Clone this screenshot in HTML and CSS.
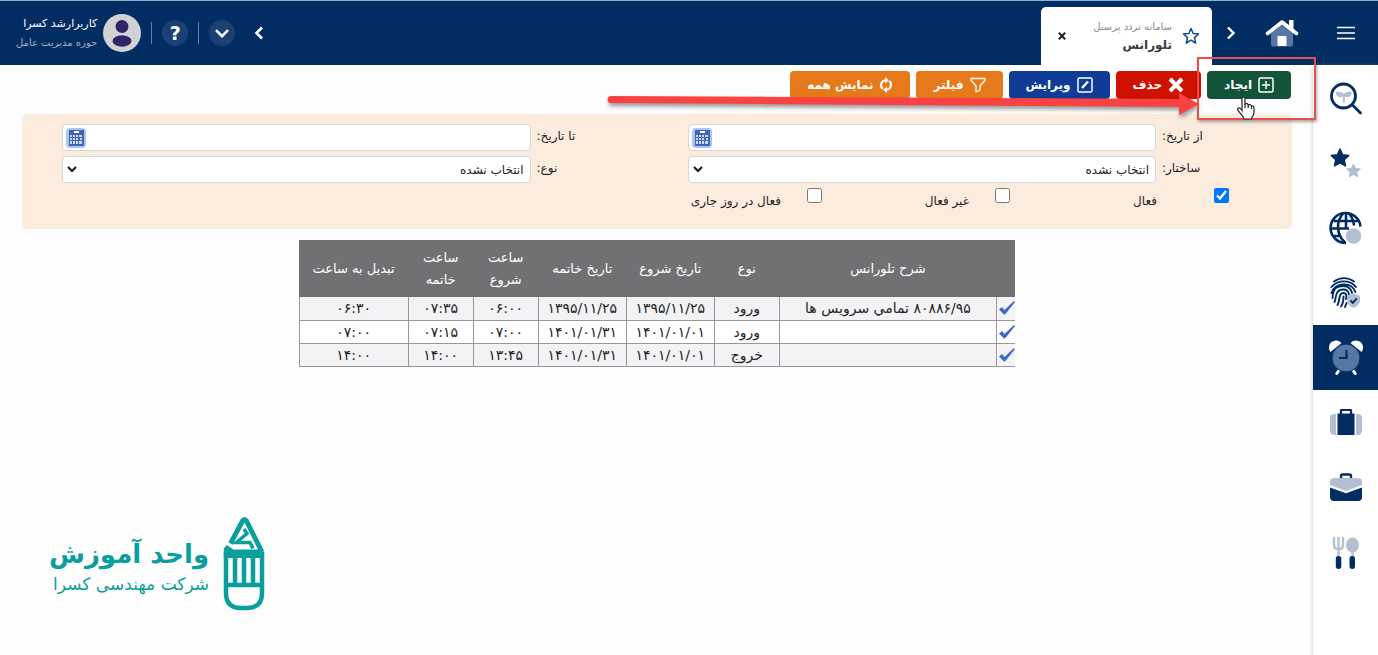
FILE: index.html
```html
<!DOCTYPE html>
<html lang="fa" dir="rtl">
<head>
<meta charset="utf-8">
<meta name="viewport" content="width=device-width, initial-scale=1">
<title>تلورانس</title>
<link rel="stylesheet" href="styles.css">
</head>
<body>
<header class="topbar">
  <button class="icon-btn menu-btn" aria-label="منو">
    <svg width="18" height="14" viewBox="0 0 18 14" stroke="#fff" stroke-width="1.6"><path d="M0 1.5h18M0 7h18M0 12.5h18"/></svg>
  </button>
  <a class="home" href="#" aria-label="خانه">
    <svg width="34" height="30" viewBox="0 0 34 30"><path d="M6 13 17 5l11 9v12.500q0 2-2 2H8q-2 0-2-2z" fill="#5677a4"/><rect x="12.500" y="18" width="9" height="10" rx="1" fill="#fff"/><path d="M24 2h4.500v11L24 8z" fill="#fff"/><path d="M2.500 15.500 17 4l14.500 11.500" fill="none" stroke="#fff" stroke-width="3.600" stroke-linecap="round" stroke-linejoin="round"/></svg>
  </a>
  <button class="icon-btn next-btn" aria-label="بعدی">
    <svg width="10" height="14" viewBox="0 0 10 14" fill="none" stroke="#fff" stroke-width="2.400"><path d="m2 1.500 5.500 5.500L2 12.500"/></svg>
  </button>
  <div class="tab">
    <svg width="18" height="18" viewBox="0 0 18 18" fill="none" stroke="#0b4a8c" stroke-width="1.500" stroke-linejoin="round"><path d="m9 1.500 2.200 5 5.400.5-4.100 3.600 1.200 5.400L9 13.200 4.300 16l1.200-5.400L1.400 7l5.400-.5z"/></svg>
    <div class="tab-text"><span class="tab-sub">سامانه تردد پرسنل</span><strong class="tab-title">تلورانس</strong></div>
    <button class="icon-btn tab-close" aria-label="بستن">
      <svg width="8" height="8" viewBox="0 0 8 8" stroke="#222" stroke-width="2"><path d="m.8.8 6.400 6.400M7.200.8.8 7.200"/></svg>
    </button>
  </div>
  <div class="top-end">
    <button class="icon-btn prev-btn" aria-label="قبلی">
      <svg width="10" height="14" viewBox="0 0 10 14" fill="none" stroke="#fff" stroke-width="2.600"><path d="M8 1.500 2.500 7 8 12.500"/></svg>
    </button>
    <button class="icon-btn round" aria-label="باز کردن">
      <svg width="14" height="9" viewBox="0 0 14 9" fill="none" stroke="#fff" stroke-width="2.600"><path d="m1 1.200 6 6 6-6"/></svg>
    </button>
    <span class="sep"></span>
    <button class="icon-btn round help">?</button>
    <span class="sep"></span>
    <svg class="avatar" width="38" height="38" viewBox="0 0 38 38"><circle cx="19" cy="19" r="19" fill="#d2d2d4"/><circle cx="19" cy="12.500" r="6.500" fill="#2e2666"/><ellipse cx="19" cy="27" rx="9.500" ry="5.800" fill="#2e2666"/></svg>
    <div class="user"><span class="user-name">کاربرارشد کسرا</span><span class="user-role">حوزه مدیریت عامل</span></div>
  </div>
</header>

<div class="layout">
  <nav class="sidebar">
    <a href="#" class="nav-item" aria-label="جستجو"><svg width="34" height="34" viewBox="0 0 34 34"><path d="M14.800 14.500c-1.200 1.500-3 1.900-4.800 1.500-2.400-.5-3.500-3-3-5 3-.8 6 0 7.800 2 1.700-2 4.700-2.900 7.700-2 .5 2.500-.9 4.800-3.500 5-1.700.2-3.200-.3-4.200-1.500z" fill="#b4bfd2"/><path d="M13.800 14h2v7.500h-2z" fill="#b4bfd2"/><circle cx="14.500" cy="15" r="12" fill="none" stroke="#022d63" stroke-width="2.800"/><path d="m23.500 24 8 8" stroke="#022d63" stroke-width="2.800" stroke-linecap="round"/></svg></a>
    <a href="#" class="nav-item" aria-label="علاقه‌مندی"><svg width="34" height="34" viewBox="0 0 34 34" stroke-linejoin="round"><path d="m11 3 2.600 5.800 6.200.7-4.600 4.200 1.300 6.200L11 16.800l-5.500 3.100 1.300-6.200-4.600-4.200 6.200-.7z" fill="#022d63" stroke="#022d63" stroke-width="1.500"/><path d="m24.500 18 2 4.300 4.800.6-3.500 3.200.9 4.700-4.200-2.300-4.200 2.300.9-4.700-3.500-3.200 4.800-.6z" fill="#b4bfd2" stroke="#b4bfd2"/></svg></a>
    <a href="#" class="nav-item" aria-label="شبکه"><svg width="34" height="34" viewBox="0 0 34 34"><g fill="none" stroke="#022d63" stroke-width="2.600"><path d="M31.500 15.500A15 15 0 1 0 17 32"/><path d="M14 2.500c-7 8-7 21 2.500 29.500M20 2.500c3 3.500 4.700 7.500 5 12M17 2v15.500M4.500 10h25M2 17.500h18M4.500 25H12"/></g><circle cx="24.500" cy="25" r="7.800" fill="#b4bfd2"/></svg></a>
    <a href="#" class="nav-item" aria-label="تردد"><svg width="34" height="34" viewBox="0 0 34 34"><g fill="none" stroke="#022d63" stroke-width="1.900" stroke-linecap="round"><path d="M5 5.500C11 1 19 1 25 5.500M2.500 11C9 3.500 21 3.500 27 11M2.500 17C5 7 22 4.500 26.500 16M3.500 22C4 11 9 10 14.500 10c5 0 8 3.500 8.500 7M5.500 26c2-4 0-12.500 9-12.500 3 0 5 2 5.500 5M8.500 29c3-5 .5-12 6-12 3.500 0 3 4 2.500 6M12 30.500c2.500-3.500 2.500-6.500 2.500-10M16 31l1.500-4"/></g><path d="m24.500 17.500 6.500 2.300v4.500q0 5-6.500 7.700-6.500-2.700-6.500-7.700v-4.500z" fill="#b4bfd2"/><path d="m21.500 24.500 2.300 2.300 4-4.500" fill="none" stroke="#022d63" stroke-width="2"/></svg></a>
    <a href="#" class="nav-item active" aria-label="ساعت"><svg width="34" height="36" viewBox="0 0 34 36"><path d="M1.500 12a7 7 0 0 1 11-9zM32.500 12a7 7 0 0 0-11-9z" fill="#fff"/><path d="m9.500 31-1.700 2.500M24.500 31l1.700 2.500" stroke="#fff" stroke-width="3" stroke-linecap="round"/><circle cx="17" cy="18" r="14" fill="#5677a4" stroke="#022d63"/><path d="M17.500 10v8H10" fill="none" stroke="#022d63" stroke-width="2.200"/></svg></a>
    <a href="#" class="nav-item" aria-label="سفر"><svg width="34" height="30" viewBox="0 0 34 30"><path d="M7 6H5Q1 6 1 10v12q0 5 4 5h2zM27 6h2q4 0 4 4v12q0 5-4 5h-2z" fill="#b4bfd2"/><rect x="8.500" y="5.500" width="17" height="21.500" fill="#022d63"/><path d="M12 6V2h10v4" fill="none" stroke="#022d63" stroke-width="2.200" stroke-linejoin="round"/></svg></a>
    <a href="#" class="nav-item" aria-label="کیف"><svg width="34" height="30" viewBox="0 0 34 30"><path d="M12 6V3q0-1.500 1.500-1.500h7Q22 1.500 22 3v3" fill="none" stroke="#022d63" stroke-width="2.400"/><path d="M1 12V9q0-4 4-4h24q4 0 4 4v3l-16 6z" fill="#b4bfd2"/><path d="m1 14.500 16 5.800 16-5.800V24q0 4-4 4H5q-4 0-4-4z" fill="#022d63"/></svg></a>
    <a href="#" class="nav-item" aria-label="غذا"><svg width="34" height="34" viewBox="0 0 34 34"><path d="M5 2v7q0 4 4.500 4.500Q14 13 14 9V2M9.500 2v17" fill="none" stroke="#b4bfd2" stroke-width="2.400" stroke-linecap="round"/><ellipse cx="23.500" cy="9" rx="6.500" ry="7.500" fill="#b4bfd2"/><path d="M23.500 15v5" stroke="#b4bfd2" stroke-width="2.400"/><rect x="6.800" y="20" width="5.500" height="13" rx="2.700" fill="#022d63"/><rect x="20.500" y="20" width="5.500" height="13" rx="2.700" fill="#022d63"/></svg></a>
  </nav>

  <main class="content">
    <div class="toolbar">
      <button class="btn green"><svg width="16" height="16" viewBox="0 0 16 16" fill="none" stroke="#fff" stroke-width="1.500"><rect x="1" y="1" width="14" height="14" rx="1.500"/><path d="M8 4v8M4 8h8"/></svg>ایجاد</button>
      <button class="btn red"><svg width="16" height="16" viewBox="0 0 16 16" stroke="#fff" stroke-width="4"><path d="m2 2 12 12M14 2 2 14"/></svg>حذف</button>
      <button class="btn blue"><svg width="16" height="16" viewBox="0 0 16 16" fill="none" stroke="#fff" stroke-width="1.500"><rect x="1" y="1" width="14" height="14" rx="1.500"/><path d="m5 11 6-6.500" stroke-width="2.400"/></svg>ویرایش</button>
      <button class="btn orange"><svg width="16" height="16" viewBox="0 0 16 16" fill="none" stroke="#fff" stroke-width="1.300" stroke-linejoin="round"><path d="M1 1.500h14v1.800L10 9v4l-4 2V9L1 3.300z"/></svg>فیلتر</button>
      <button class="btn orange"><svg width="14" height="16" viewBox="0 0 14 16"><path d="M3.800 12A5 5 0 0 1 6.500 3.200M10.200 4A5 5 0 0 1 7.500 12.800" fill="none" stroke="#fff" stroke-width="2"/><path d="M6 0v6.400l3.800-3.200zM8 9.600V16l-3.800-3.200z" fill="#fff"/></svg>نمایش همه</button>
    </div>

    <form class="filters">
      <label for="from">از تاریخ:</label>
      <div class="date"><input id="from" type="text"><button type="button" class="icon-btn" aria-label="تقویم"><svg width="20" height="20" viewBox="0 0 20 20"><rect width="20" height="20" rx="4" fill="#a9c5f1"/><rect x="3" y="2" width="15" height="16" fill="#4465ae"/><path d="M8 3h5v2H8z" fill="#fff"/><path d="M4 7h2v2H4zm3 0h2v2H7zm3 0h2v2h-2zm3 0h3v2h-3zM4 10h2v2H4zm3 0h2v2H7zm3 0h2v2h-2zm4 0h2v2h-2zM4 13h2v3H4zm3 0h2v3H7zm3 0h2v3h-2zm3 0h3v3h-3z" fill="#c9dafb"/></svg></button></div>
      <label for="to">تا تاریخ:</label>
      <div class="date"><input id="to" type="text"><button type="button" class="icon-btn" aria-label="تقویم"><svg width="20" height="20" viewBox="0 0 20 20"><rect width="20" height="20" rx="4" fill="#a9c5f1"/><rect x="3" y="2" width="15" height="16" fill="#4465ae"/><path d="M8 3h5v2H8z" fill="#fff"/><path d="M4 7h2v2H4zm3 0h2v2H7zm3 0h2v2h-2zm3 0h3v2h-3zM4 10h2v2H4zm3 0h2v2H7zm3 0h2v2h-2zm4 0h2v2h-2zM4 13h2v3H4zm3 0h2v3H7zm3 0h2v3h-2zm3 0h3v3h-3z" fill="#c9dafb"/></svg></button></div>
      <label for="org">ساختار:</label>
      <div class="pick"><select id="org"><option>انتخاب نشده</option></select><svg width="10" height="7" viewBox="0 0 10 7" fill="none" stroke="#111" stroke-width="2"><path d="m1 1 4 4 4-4"/></svg></div>
      <label for="kind">نوع:</label>
      <div class="pick"><select id="kind"><option>انتخاب نشده</option></select><svg width="10" height="7" viewBox="0 0 10 7" fill="none" stroke="#111" stroke-width="2"><path d="m1 1 4 4 4-4"/></svg></div>
      <div class="checks">
        <label class="check first"><input type="checkbox" checked><span>فعال</span></label>
        <label class="check"><input type="checkbox"><span>غیر فعال</span></label>
        <label class="check"><input type="checkbox"><span>فعال در روز جاری</span></label>
      </div>
    </form>

    <table class="grid">
      <colgroup><col class="c-mark"><col class="c-desc"><col class="c-small"><col class="c-date"><col class="c-date"><col class="c-small"><col class="c-small"><col class="c-conv"></colgroup>
      <thead><tr><th></th><th>شرح تلورانس</th><th>نوع</th><th>تاریخ شروع</th><th>تاریخ خاتمه</th><th>ساعت شروع</th><th>ساعت خاتمه</th><th>تبدیل به ساعت</th></tr></thead>
      <tbody>
        <tr><td><svg width="16" height="14" viewBox="0 0 16 14"><path d="M0 8.500 3 6l2.500 3L15 0l1 1L6 13.500H5z" fill="#4268c4"/></svg></td><td>۸۰۸۸۶/۹۵ تمامي سرويس ها</td><td>ورود</td><td>۱۳۹۵/۱۱/۲۵</td><td>۱۳۹۵/۱۱/۲۵</td><td>۰۶:۰۰</td><td>۰۷:۳۵</td><td>۰۶:۳۰</td></tr>
        <tr><td><svg width="16" height="14" viewBox="0 0 16 14"><path d="M0 8.500 3 6l2.500 3L15 0l1 1L6 13.500H5z" fill="#4268c4"/></svg></td><td></td><td>ورود</td><td>۱۴۰۱/۰۱/۰۱</td><td>۱۴۰۱/۰۱/۳۱</td><td>۰۷:۰۰</td><td>۰۷:۱۵</td><td>۰۷:۰۰</td></tr>
        <tr><td><svg width="16" height="14" viewBox="0 0 16 14"><path d="M0 8.500 3 6l2.500 3L15 0l1 1L6 13.500H5z" fill="#4268c4"/></svg></td><td></td><td>خروج</td><td>۱۴۰۱/۰۱/۰۱</td><td>۱۴۰۱/۰۱/۳۱</td><td>۱۳:۴۵</td><td>۱۴:۰۰</td><td>۱۴:۰۰</td></tr>
      </tbody>
    </table>

    <footer class="brand">
      <svg width="42" height="94" viewBox="0 0 42 94" fill="none" stroke="#0a9f9d"><path d="M3 37v39q0 15 15 15h6q15 0 15-15V37z" stroke-width="4.500"/><path d="M3 68h36" stroke-width="4.500"/><path d="M12 37v31M21 37v31M30 37v31" stroke-width="4.500"/><path d="M7.500 26.500 19.500 4q2-3 4 0L39 35" stroke-width="5"/><path d="M.8 41v-9.500l3-3.500 6.500 4.500H38l3.300 8.500z" fill="#0a9f9d" stroke="none"/><path d="m21 12 3 4.500-10.500 9H27l3 6" stroke-width="3.500"/></svg>
      <div class="brand-text"><strong class="brand-title">واحد آموزش</strong><span class="brand-sub">شرکت مهندسی کسرا</span></div>
    </footer>

    <svg class="arrow" width="596" height="32" viewBox="0 0 596 32"><path d="M5 7 573 10V4l20 11-20 11v-8L5 14a3.500 3.500 0 0 1 0-7z" fill="#fb4242"/></svg>
    <div class="highlight"></div>
    <svg class="pointer" width="20" height="24" viewBox="0 0 20 24"><path d="M6 12V2.500Q6 1 7.500 1T9 2.500V8q2.500-1 3.200.8Q15 8 15.500 10q2.500-.5 2.500 2v4q0 3-2 5l-.5 2H8l-1-2.500-5-6q-1-2 .5-2.500T6 14.500z" fill="#fff" stroke="#222" stroke-width="1.200"/><path d="M9 8v4M12.200 9v3M15.500 10v3" stroke="#222" stroke-width="1.200"/></svg>
  </main>
</div>
</body>
</html>
```
FILE: styles.css
```css
* { box-sizing: border-box; }

body {
  margin: 0;
  min-height: 100vh;
  display: flex;
  flex-direction: column;
  background: #fdfdfe;
  color: #222;
  font: 12px/22px "DejaVu Sans", sans-serif;
}

button, input, select { font: inherit; color: inherit; }
svg { display: block; flex: none; }

.icon-btn {
  display: flex;
  align-items: center;
  justify-content: center;
  padding: 0;
  border: 0;
  background: none;
}

.topbar {
  display: flex;
  align-items: center;
  height: 65px;
  background: #022d63;
  border-top: 1px solid #8cb3cf;
}

.menu-btn { width: 65px; height: 64px; }
.home { margin-right: 14px; }
.next-btn { width: 20px; margin: 0 24px 0 0; }

.tab {
  display: flex;
  align-items: center;
  align-self: flex-end;
  width: 171px;
  height: 58px;
  margin-right: 9px;
  padding: 0 12px 0 17px;
  border-radius: 5px 5px 0 0;
  background: #fff;
}

.tab-text {
  display: flex;
  flex: 1;
  flex-direction: column;
  padding-right: 10px;
  line-height: 19px;
  white-space: nowrap;
}

.tab-sub { color: #8a8a8a; font-size: 10px; }
.tab-title { color: #3d3a40; font-size: 12px; }

.top-end {
  display: flex;
  align-items: center;
  gap: 10px;
  margin-right: auto;
  padding-left: 16px;
}

.prev-btn { width: 20px; margin-left: 4px; }
.round { width: 26px; height: 26px; border-radius: 50%; background: #1b4174; }
.help { color: #fff; font-size: 19px; font-weight: bold; }
.sep { width: 1px; height: 22px; background: #6480a3; }

.user {
  display: flex;
  flex-direction: column;
  margin-right: -4px;
  line-height: 19px;
  white-space: nowrap;
}

.user-name { color: #fff; font-size: 11px; }
.user-role { color: #9fb2ca; font-size: 10px; }

.layout { display: flex; flex: 1; }

.sidebar {
  flex: none;
  width: 65px;
  background: #fff;
  box-shadow: 0 2px 4px #c4c4cc;
}

.nav-item {
  display: flex;
  align-items: center;
  justify-content: center;
  height: 65px;
}

.nav-item.active { background: #022d63; }

.content {
  position: relative;
  display: flex;
  flex: 1;
  flex-direction: column;
  min-width: 0;
}

.toolbar { display: flex; gap: 6px; padding: 6px 22px 0; }

.btn {
  display: flex;
  align-items: center;
  justify-content: center;
  gap: 6px;
  height: 28px;
  padding: 0 17px;
  border: 0;
  border-radius: 4px;
  color: #fff;
  font-size: 12px;
  font-weight: bold;
  line-height: 20px;
  white-space: nowrap;
}

.green { background: #12533a; }
.red { background: #cf1200; }
.blue { background: #103c98; }
.orange { background: #e67a1a; }

.filters {
  display: grid;
  grid-template-columns: 136px 1fr 157px 1fr;
  gap: 5px 0;
  margin: 15px 21px 0 22px;
  padding: 10px 0 13px 40px;
  border-radius: 5px;
  background: #fcecde;
}

.filters > label { padding-left: 6px; text-align: left; line-height: 24px; }

.date, .pick {
  display: flex;
  align-items: center;
  height: 27px;
  border: 1px solid #d3d6dc;
  border-radius: 4px;
  background: #fff;
}

.date { padding-left: 3px; }
.pick { padding-left: 4px; }

.date input, .pick select {
  flex: 1;
  min-width: 0;
  height: 25px;
  padding: 0 6px;
  border: 0;
  background: none;
  appearance: none;
}

.checks { grid-column: 1 / -1; display: flex; padding-right: 63px; }
.check { display: flex; width: 188px; height: 28px; gap: 26px; white-space: nowrap; }
.check.first { width: 219px; gap: 57px; }
.check input { width: 15px; height: 15px; margin: 0; }
.check span { padding-top: 2px; }

.grid {
  align-self: center;
  width: 716px;
  margin-top: 11px;
  border-collapse: collapse;
  table-layout: fixed;
  text-align: center;
}

.c-mark { width: 18px; }
.c-desc { width: 217px; }
.c-small { width: 65px; }
.c-date { width: 88px; }
.c-conv { width: 109px; }

.grid th {
  height: 57px;
  padding: 0 8px;
  background: #717073;
  color: #fff;
  font-size: 13px;
  font-weight: normal;
}

.grid td {
  height: 23px;
  padding: 0;
  border: solid #97979c;
  border-width: 0 0 1px 1px;
  background: #fff;
  font-size: 14px;
  line-height: 20px;
}

.grid tbody tr:nth-child(odd) td { background: #f3f2f5; }

.brand {
  display: flex;
  align-items: center;
  gap: 14px;
  align-self: flex-end;
  margin: auto auto 44px 49px;
  color: #0a9f9d;
  white-space: nowrap;
}

.brand-text { display: flex; flex-direction: column; padding-top: 6px; }
.brand-title { font-size: 26px; line-height: 34px; }
.brand-sub { font-size: 17px; line-height: 26px; }

.arrow {
  position: absolute;
  top: 24px;
  left: 606px;
  filter: drop-shadow(1px 3px 2px #0006);
}

.highlight {
  position: absolute;
  top: -8px;
  left: 1197px;
  width: 119px;
  height: 63px;
  border: 2px solid #ee4b4b;
  box-shadow: 1px 2px 3px #0005;
}

.pointer { position: absolute; top: 31px; left: 1236px; }
```
